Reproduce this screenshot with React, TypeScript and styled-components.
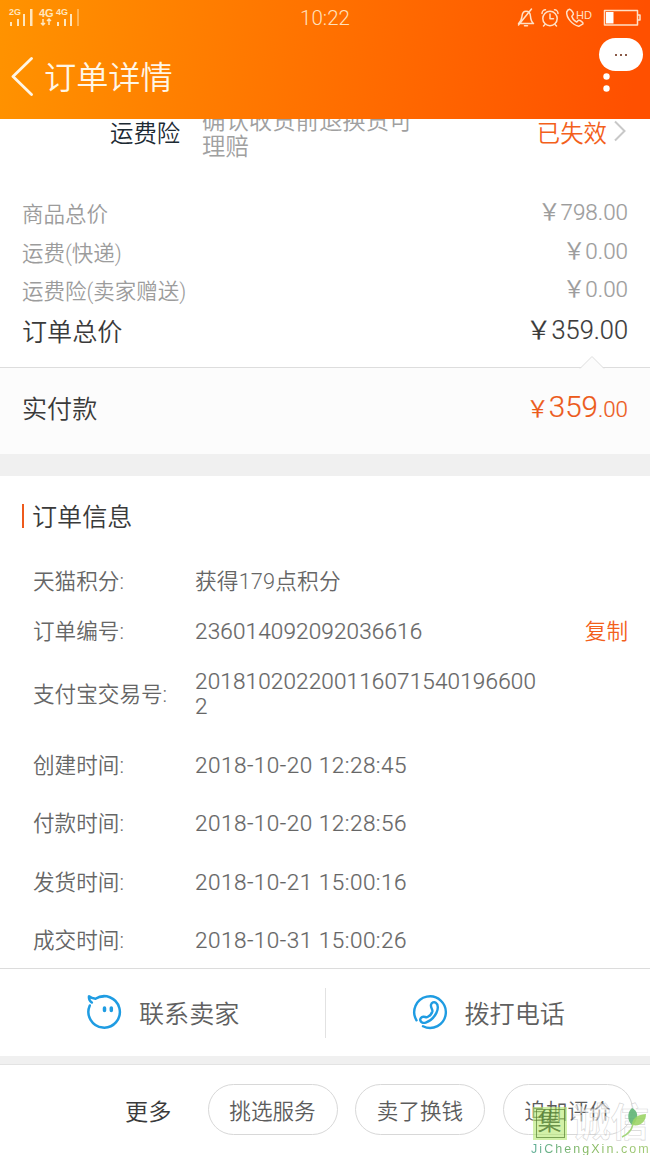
import React from "react";
import styled, { createGlobalStyle } from "styled-components";

const GlobalStyle = createGlobalStyle`
  * { box-sizing: border-box; }
  html, body { margin: 0; padding: 0; background: #fff; }
  body { font-family: Roboto, "Noto Sans CJK SC", sans-serif; font-weight: 350; }
`;

const Screen = styled.div`
  position: relative;
  width: 650px;
  height: 1155px;
  overflow: hidden;
  display: flex;
  flex-direction: column;
  background: #fff;
`;

const Header = styled.header`
  height: 119px;
  flex: none;
  position: relative;
  z-index: 1;
  display: flex;
  flex-direction: column;
  background: linear-gradient(98deg, #ff9300 0%, #ff5000 97%);
  color: #fff6e6;
`;

const StatusBar = styled.div`
  height: 34px;
  display: grid;
  grid-template-columns: 1fr auto 1fr;
  align-items: center;
`;

const StatusLeft = styled.div`
  padding-left: 8px;
  display: flex;
`;

const Clock = styled.div`
  font-size: 20.5px;
  line-height: 34px;
  padding-top: 1px;
  color: #ffe0bd;
`;

const StatusRight = styled.div`
  display: flex;
  justify-content: flex-end;
  padding-right: 8px;
`;

const TitleBar = styled.div`
  flex: 1;
  display: flex;
  align-items: center;
  padding: 0 36px 0 11px;
`;

const PageTitle = styled.h1`
  flex: 1;
  margin: 2px 0 0 10px;
  font-size: 32.2px;
  line-height: 40px;
  font-weight: 350;
`;

const MoreBubble = styled.button`
  position: absolute;
  top: 38px;
  right: 7px;
  width: 44px;
  height: 33px;
  padding: 0;
  border: 0;
  border-radius: 17px;
  background: #fff;
  display: flex;
  align-items: center;
  justify-content: center;
  gap: 3px;
`;

const BubbleDot = styled.i`
  width: 2px;
  height: 2px;
  background: #8a5a48;
`;

const Insurance = styled.section`
  height: 75px;
  flex: none;
  display: flex;
  align-items: flex-start;
  padding: 1px 23px 0 110px;
  font-size: 23.4px;
  line-height: 28px;
`;

const InsuranceName = styled.div`
  width: 92px;
  color: #1c2a33;
`;

const InsuranceText = styled.div`
  width: 216px;
  margin-top: -12px;
  line-height: 26px;
  color: #a0a0a0;
`;

const InsuranceState = styled.div`
  margin-left: auto;
  display: flex;
  align-items: flex-start;
  gap: 6px;
  color: #f3601b;
`;

const Totals = styled.section`
  flex: none;
  height: 173px;
  padding: 2px 22px 0;
`;

const TotalRow = styled.div<{ $strong?: boolean }>`
  display: flex;
  justify-content: space-between;
  height: ${(p) => (p.$strong ? 42 : 38.7)}px;
  line-height: ${(p) => (p.$strong ? 42 : 38.7)}px;
  font-size: ${(p) => (p.$strong ? 25.1 : 21.5)}px;
  color: ${(p) => (p.$strong ? "#3a3a3a" : "#9c9c9c")};
`;

const Amount = styled.span<{ $strong?: boolean }>`
  font-size: ${(p) => (p.$strong ? 25.4 : 22.4)}px;
  margin-top: ${(p) => (p.$strong ? -3 : -3)}px;
  -webkit-text-stroke: 0.2px currentColor;
`;

const Paid = styled.section`
  position: relative;
  flex: none;
  height: 87px;
  padding: 0 22px 8px;
  border-top: 1px solid #ddd;
  background: #fcfcfc;
  display: flex;
  align-items: center;
  justify-content: space-between;
  font-size: 25.1px;
  color: #3a3a3a;
`;

const Notch = styled.svg`
  position: absolute;
  top: -13px;
  right: 45px;
`;

const PaidAmount = styled.span`
  color: #ec5a1a;
  font-size: 22.3px;
  -webkit-text-stroke: 0.2px currentColor;
  b { font-weight: 350; font-size: 29.5px; }
`;

const Gap = styled.div<{ $h: number }>`
  flex: none;
  height: ${(p) => p.$h}px;
  background: #f0f0f0;
`;

const Info = styled.section`
  flex: none;
  height: 492px;
  padding: 20px 22px 0;
`;

const InfoTitle = styled.h2`
  margin: 0 0 18px;
  display: flex;
  align-items: center;
  font-size: 25.1px;
  line-height: 40px;
  font-weight: 350;
  color: #3a3a3a;
  span { padding-top: 3px; line-height: 37px; }
`;

const TitleMark = styled.i`
  width: 2px;
  height: 24px;
  margin-right: 8px;
  background: #ee5a1c;
`;

const InfoRow = styled.div<{ $h: number }>`
  display: flex;
  align-items: center;
  height: ${(p) => p.$h}px;
  padding-left: 11px;
  font-size: 21.6px;
  color: #666;
`;

const InfoLabel = styled.div`
  width: 162px;
  padding-top: 1px;
`;

const InfoValue = styled.div<{ $date?: boolean }>`
  width: 345px;
  padding-top: 5px;
  font-size: 22.5px;
  letter-spacing: ${(p) => (p.$date ? 0.5 : 0.15)}px;
  line-height: 25px;
  word-break: break-all;
  -webkit-text-stroke: 0.2px currentColor;
`;

const Points = styled.span`
  font-size: 21.7px;
  -webkit-text-stroke: 0;
`;

const Copy = styled.button`
  margin-left: auto;
  padding: 0;
  border: 0;
  background: none;
  font: inherit;
  color: #f3601b;
`;

const Actions = styled.nav`
  flex: none;
  height: 88px;
  border-top: 1px solid #dcdcdc;
  display: flex;
  align-items: center;
`;

const Action = styled.button`
  flex: 1;
  height: 50px;
  margin: 0;
  padding: 0 0 2px 86px;
  border: 0;
  background: none;
  display: flex;
  align-items: center;
  gap: 17px;
  font: inherit;
  font-size: 25.1px;
  color: #606060;
  & + & { border-left: 1px solid #e2e2e2; }
`;

const Footer = styled.footer`
  flex: 1;
  border-top: 1px solid #e3e3e3;
  display: flex;
  align-items: flex-start;
  padding: 19px 16px 0 125px;
  gap: 17.5px;
`;

const MoreLabel = styled.div`
  width: 65px;
  flex: none;
  padding-top: 2px;
  line-height: 52px;
  font-size: 23.2px;
  color: #3a3a3a;
`;

const Pill = styled.button`
  width: 130px;
  height: 51px;
  flex: none;
  padding: 0;
  border: 1px solid #d8d8d8;
  border-radius: 26px;
  background: #fff;
  font: inherit;
  font-size: 21.6px;
  color: #5c5c5c;
`;

const Watermark = styled.div`
  position: absolute;
  left: 531px;
  top: 1104px;
  width: 122px;
  display: flex;
  flex-direction: column;
`;

const MarkRow = styled.div`
  position: relative;
  display: flex;
  align-items: center;
  height: 38px;
`;

const Seal = styled.div`
  width: 34px;
  height: 33px;
  margin-left: 2px;
  background: rgba(180, 232, 110, 0.6);
  display: flex;
  align-items: center;
  justify-content: center;
`;

const SealInner = styled.span`
  width: 29px;
  height: 29px;
  border: 1.5px solid rgba(86, 128, 50, 0.7);
  font-size: 24px;
  line-height: 25px;
  text-align: center;
  text-indent: -1px;
  font-weight: 400;
  color: rgba(78, 120, 48, 0.8);
`;

const MarkText = styled.span`
  margin-left: 5px;
  font-size: 38.5px;
  line-height: 38px;
  font-weight: 700;
  color: rgba(255, 255, 255, 0.55);
  -webkit-text-stroke: 0.6px rgba(190, 190, 190, 0.65);
`;

const Leaf = styled.svg`
  position: absolute;
  left: 88px;
  top: 3px;
`;

const MarkUrl = styled.span`
  font-family: "Liberation Sans", sans-serif;
  font-weight: 400;
  font-size: 12.5px;
  line-height: 14px;
  letter-spacing: 2.05px;
  color: transparent;
  background: linear-gradient(90deg, #5fae98, #84b860 45%, #a5cc78);
  background-clip: text;
  -webkit-background-clip: text;
  white-space: nowrap;
`;

const SignalIcon = () => (
  <svg width="76" height="22" viewBox="0 0 76 22" fill="#ffe6bd" fontFamily="Liberation Sans, sans-serif">
    <text x="1" y="8" fontSize="9" fontWeight="700">2G</text>
    <path d="M2 15h2v4H2zM9 12h2v7H9zM15 7h2v12h-2zM22 2h2.5v17H22z" />
    <text x="31" y="10" fontSize="11" fontWeight="700">4G</text>
    <text x="48" y="8" fontSize="9" fontWeight="700">4G</text>
    <path d="M35 12v6M33 16l2 2 2-2M41 18v-6M39 14l2-2 2 2" fill="none" stroke="#ffe6bd" strokeWidth="1.5" />
    <path d="M49 15h2v4h-2zM56 12h2v7h-2zM62 7h2v12h-2z" />
    <path d="M69 2h2v17h-2z" opacity=".45" />
  </svg>
);

const StatusIcons = () => (
  <svg width="128" height="24" viewBox="514 4.500 128 24" fill="none" stroke="#ffe0c6" strokeWidth="1.5" strokeLinecap="round" strokeLinejoin="round">
    <path d="M518.500 22c3-2 3-4 3.500-7.500.4-3 2-4.800 4-4.800 2.800 0 4.300 2 4.500 5 .2 3 .6 5.300 3 7.300zM531.500 7.500l-13 16M524.500 24.300h3" />
    <circle cx="550" cy="17" r="7.200" />
    <path d="M550 12.500v4.700h3.500M542 12c0-2 1.500-3.700 3.500-3.700M558 12c0-2-1.500-3.700-3.500-3.700M545 23l-1.500 1.500M555 23l1.500 1.500" />
    <path d="M568 8.500l-1.300 2c-.4 5.500 5.300 12.700 12 14.300l4.300-2.400c.4-2-3-3.800-4.500-3.600l-1.900 1.800c-2.100-1-4.100-3.400-4.800-5.700l1.600-2.200c.2-1.900-2.400-4.600-3.800-4.900z" />
    <text x="576" y="17.500" fontSize="11" fill="#ffe0c6" stroke="none" fontWeight="400" fontFamily="Liberation Sans, sans-serif">HD</text>
    <path d="M604.500 9h33v14.500h-33zM637.500 13.500h2.500v5h-2.500" />
    <path d="M606 10.500h7.500v11.500H606z" fill="#fff" stroke="none" />
  </svg>
);

const BackIcon = () => (
  <svg width="23" height="40" viewBox="0 0 23 40" fill="none" stroke="#fff6e6" strokeWidth="2.800" strokeLinecap="round" strokeLinejoin="round">
    <path d="M20.500 1.500L2 19.500l18.500 18" />
  </svg>
);

const DotsIcon = () => (
  <svg width="14" height="40" viewBox="0 0 14 40" fill="#fff">
    <circle cx="6.500" cy="19.500" r="3.200" />
    <circle cx="6.500" cy="31.500" r="3.200" />
  </svg>
);

const ChevronIcon = () => (
  <svg width="14" height="24" viewBox="0 0 14 24" fill="none" stroke="#c8c8c8" strokeWidth="2">
    <path d="M2 1.500l9.500 9.500L2 20.500" />
  </svg>
);

const ChatIcon = () => (
  <svg width="36" height="36" viewBox="0 0 36 36" fill="none" stroke="#1f9ce2" strokeWidth="2.500" strokeLinecap="round" strokeLinejoin="round">
    <path d="M3.800 11.500A15.700 15.700 0 1 0 9.500 4.800C7 4.500 4.500 3.500 3 2.300c-.3 2.200.4 4.500 2.800 6.200M9.500 4.800c2.500-1.500 5-2.200 8-2.200" />
    <path d="M18.500 14v2.600M25.300 14v2.600" strokeWidth="3.500" />
  </svg>
);

const PhoneIcon = () => (
  <svg width="36" height="36" viewBox="0 0 36 36" fill="none" stroke="#1f9ce2" strokeWidth="2.400" strokeLinecap="round" strokeLinejoin="round">
    <path d="M4.500 26.300A15.800 15.800 0 1 1 11 32.300" />
    <path d="M19 10.800c.6-2.300 3-3.200 4.800-2 2.600 1.700 2.500 6.300.6 10.100-2.300 4.600-6.400 8.300-10.700 9.700-2.500.8-4.900-.2-5.400-2.200-.5-2 1-3.300 3-3.600 1.700-.2 2.800.9 4.200.2 2.300-1.200 4.200-3.300 4.900-5.700.4-1.700-2-3.800-1.400-6.500z" />
  </svg>
);

const info = [
  { label: "订单编号:", value: "236014092092036616", h: 50, copy: true },
  { label: "支付宝交易号:", value: "2018102022001160715401966002", h: 75 },
  { label: "创建时间:", value: "2018-10-20 12:28:45", h: 67, date: true },
  { label: "付款时间:", value: "2018-10-20 12:28:56", h: 50, date: true },
  { label: "发货时间:", value: "2018-10-21 15:00:16", h: 67, date: true },
  { label: "成交时间:", value: "2018-10-31 15:00:26", h: 50, date: true },
];

export default function App() {
  return (
    <>
      <GlobalStyle />
      <Screen>
        <Header>
          <StatusBar>
            <StatusLeft><SignalIcon /></StatusLeft>
            <Clock>10:22</Clock>
            <StatusRight><StatusIcons /></StatusRight>
          </StatusBar>
          <TitleBar>
            <BackIcon />
            <PageTitle>订单详情</PageTitle>
            <DotsIcon />
          </TitleBar>
          <MoreBubble aria-label="更多"><BubbleDot /><BubbleDot /><BubbleDot /></MoreBubble>
        </Header>

        <Insurance>
          <InsuranceName>运费险</InsuranceName>
          <InsuranceText>确认收货前退换货可理赔</InsuranceText>
          <InsuranceState>已失效<ChevronIcon /></InsuranceState>
        </Insurance>

        <Totals>
          <TotalRow><span>商品总价</span><Amount>￥798.00</Amount></TotalRow>
          <TotalRow><span>运费(快递)</span><Amount>￥0.00</Amount></TotalRow>
          <TotalRow><span>运费险(卖家赠送)</span><Amount>￥0.00</Amount></TotalRow>
          <TotalRow $strong><span>订单总价</span><Amount $strong>￥359.00</Amount></TotalRow>
        </Totals>

        <Paid>
          <Notch width="26" height="14" viewBox="0 0 26 14">
            <path d="M1 13.500L13 1.500l12 12" fill="#fcfcfc" stroke="#ddd" />
          </Notch>
          <span>实付款</span>
          <PaidAmount>￥<b>359</b>.00</PaidAmount>
        </Paid>
        <Gap $h={22} />

        <Info>
          <InfoTitle><TitleMark /><span>订单信息</span></InfoTitle>
          <InfoRow $h={50}>
            <InfoLabel>天猫积分:</InfoLabel>
            <InfoValue><Points>获得179点积分</Points></InfoValue>
          </InfoRow>
          {info.map((r) => (
            <InfoRow key={r.label} $h={r.h}>
              <InfoLabel>{r.label}</InfoLabel>
              <InfoValue $date={r.date}>{r.value}</InfoValue>
              {r.copy && <Copy>复制</Copy>}
            </InfoRow>
          ))}
        </Info>

        <Actions>
          <Action><ChatIcon />联系卖家</Action>
          <Action><PhoneIcon />拨打电话</Action>
        </Actions>
        <Gap $h={8} />

        <Footer>
          <MoreLabel>更多</MoreLabel>
          <Pill>挑选服务</Pill>
          <Pill>卖了换钱</Pill>
          <Pill>追加评价</Pill>
        </Footer>

        <Watermark>
          <MarkRow>
            <Seal><SealInner>集</SealInner></Seal>
            <MarkText>诚信</MarkText>
            <Leaf width="30" height="32" viewBox="0 0 30 32">
              <path d="M13 18C8 14 8 5 13 1c6 3 7 9 2 16z" fill="#5fb574" opacity=".9" />
              <path d="M13 18c0-6 4-10 14-11 0 8-6 13-14 11z" fill="#9cd566" opacity=".9" />
              <path d="M14 17c-1 5-4 10-11 13" fill="none" stroke="#a4d67c" strokeWidth="1.500" />
            </Leaf>
          </MarkRow>
          <MarkUrl>JiChengXin.com</MarkUrl>
        </Watermark>
      </Screen>
    </>
  );
}
